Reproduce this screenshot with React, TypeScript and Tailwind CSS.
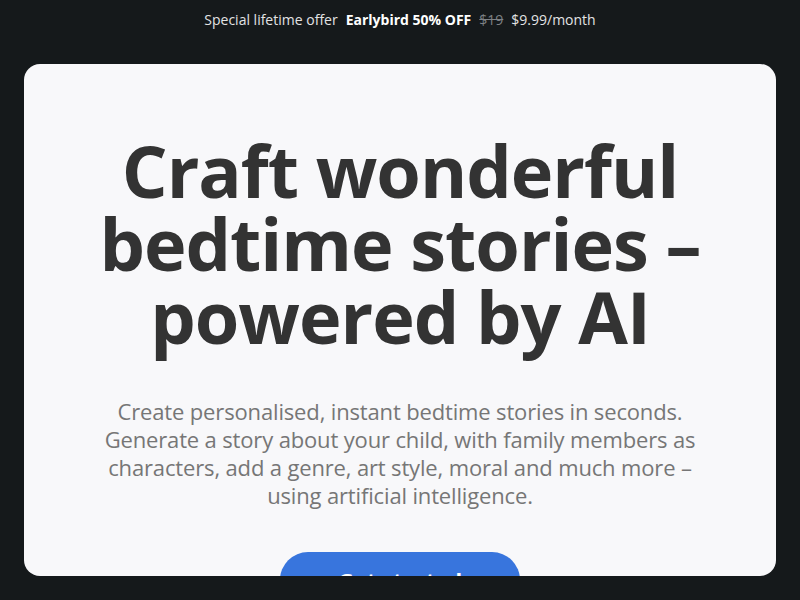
import React from "react";

const App = () => {
  return (
    <div
      className="h-screen flex flex-col bg-[#15191b] overflow-hidden"
      style={{ fontFamily: "'Open Sans', 'Noto Sans', sans-serif" }}
    >
      {/* promo bar */}
      <div className="h-[38px] flex items-center justify-center gap-2 text-[14px] text-[#e2e3e4]">
        <span>Special lifetime offer</span>
        <span className="font-bold text-white">Earlybird 50% OFF</span>
        <span className="line-through text-[#7d8185]">$19</span>
        <span>$9.99/month</span>
      </div>

      <div className="mx-6 mt-[26px] mb-6 flex-1 rounded-2xl bg-[#f8f8fa] overflow-hidden">
        <div className="flex flex-col items-center pt-[70px] px-10">
          <h1 className="text-center text-[72px] leading-[73px] font-bold tracking-[-1px] text-[#333333]">
            Craft wonderful
            <br />
            bedtime stories –
            <br />
            powered by AI
          </h1>
          <p className="mt-11 max-w-[606px] text-center text-[22px] leading-[28px] tracking-[-0.15px] text-[#767676]">
            Create personalised, instant bedtime stories in seconds. Generate a story about your child, with family members as characters, add a genre, art style, moral and much more – using artificial intelligence.
          </p>
          <button className="mt-[43px] w-[240px] h-14 rounded-full bg-[#3875dd] text-white text-[22px] font-bold">
            Get started
          </button>
        </div>
      </div>
    </div>
  );
};

export default App;
